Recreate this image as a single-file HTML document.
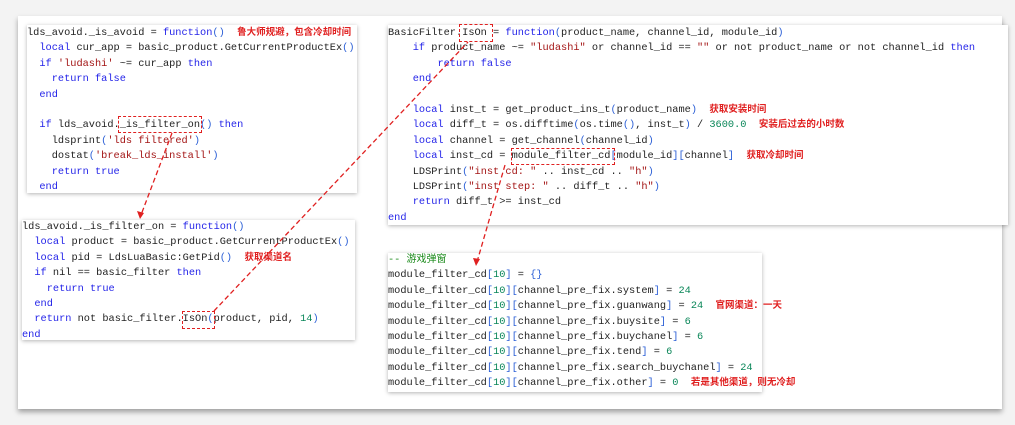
<!DOCTYPE html>
<html><head><meta charset="utf-8"><style>
body{margin:0;width:1015px;height:425px;background:#f3f3f3;position:relative;overflow:hidden;font-family:"Liberation Mono",monospace}
.panel{position:absolute;left:18px;top:16px;width:984px;height:393px;background:#fff;box-shadow:0 3px 5px rgba(0,0,0,.35)}
.box{position:absolute;background:#fff;box-shadow:0 1px 4px rgba(0,0,0,.3)}
pre{margin:0;font-family:"Liberation Mono",monospace;font-size:10.3px;line-height:15.4px;color:#222;white-space:pre}
pre>*{line-height:0}
.k{color:#2323e8}.s{color:#a31515}.n{color:#098658}.c{color:#1a8a1a}.b{color:#2b5fd6}
.a{font-family:"Noto Sans CJK SC",sans-serif;font-weight:bold;color:#e02020;font-size:9.5px;line-height:0}
.cj{font-family:"Noto Sans CJK SC",sans-serif;line-height:0;font-size:10px}
.d{position:absolute;border:1.5px dashed #e02020}
svg{position:absolute;left:0;top:0}
</style></head><body>
<div class="panel"></div>
<div class="box" style="left:27px;top:25px;width:330px;height:168px"><pre style="padding-top:1px">lds_avoid._is_avoid = <span class="k">function</span><span class="b">()</span>  <span class="a">鲁大师规避，包含冷却时间</span>
  <span class="k">local</span> cur_app = basic_product.GetCurrentProductEx<span class="b">()</span>
  <span class="k">if</span> <span class="s">'ludashi'</span> ~= cur_app <span class="k">then</span>
    <span class="k">return false</span>
  <span class="k">end</span>

  <span class="k">if</span> lds_avoid._is_filter_on<span class="b">()</span> <span class="k">then</span>
    ldsprint<span class="b">(</span><span class="s">'lds filtered'</span><span class="b">)</span>
    dostat<span class="b">(</span><span class="s">'break_lds_install'</span><span class="b">)</span>
    <span class="k">return true</span>
  <span class="k">end</span></pre></div>
<div class="box" style="left:388px;top:25px;width:620px;height:200px"><pre style="padding-top:1px">BasicFilter.IsOn = <span class="k">function</span><span class="b">(</span>product_name, channel_id, module_id<span class="b">)</span>
    <span class="k">if</span> product_name ~= <span class="s">"ludashi"</span> or channel_id == <span class="s">""</span> or not product_name or not channel_id <span class="k">then</span>
        <span class="k">return false</span>
    <span class="k">end</span>

    <span class="k">local</span> inst_t = get_product_ins_t<span class="b">(</span>product_name<span class="b">)</span>  <span class="a">获取安装时间</span>
    <span class="k">local</span> diff_t = os.difftime<span class="b">(</span>os.time<span class="b">()</span>, inst_t<span class="b">)</span> / <span class="n">3600.0</span>  <span class="a">安装后过去的小时数</span>
    <span class="k">local</span> channel = get_channel<span class="b">(</span>channel_id<span class="b">)</span>
    <span class="k">local</span> inst_cd = module_filter_cd<span class="b">[</span>module_id<span class="b">][</span>channel<span class="b">]</span>  <span class="a">获取冷却时间</span>
    LDSPrint<span class="b">(</span><span class="s">"inst cd: "</span> .. inst_cd .. <span class="s">"h"</span><span class="b">)</span>
    LDSPrint<span class="b">(</span><span class="s">"inst step: "</span> .. diff_t .. <span class="s">"h"</span><span class="b">)</span>
    <span class="k">return</span> diff_t >= inst_cd
<span class="k">end</span></pre></div>
<div class="box" style="left:22px;top:220px;width:333px;height:120px"><pre>lds_avoid._is_filter_on = <span class="k">function</span><span class="b">()</span>
  <span class="k">local</span> product = basic_product.GetCurrentProductEx<span class="b">()</span>
  <span class="k">local</span> pid = LdsLuaBasic:GetPid<span class="b">()</span>  <span class="a">获取渠道名</span>
  <span class="k">if</span> nil == basic_filter <span class="k">then</span>
    <span class="k">return true</span>
  <span class="k">end</span>
  <span class="k">return</span> not basic_filter.IsOn<span class="b">(</span>product, pid, <span class="n">14</span><span class="b">)</span>
<span class="k">end</span></pre></div>
<div class="box" style="left:388px;top:253px;width:374px;height:139px"><pre><span class="c">-- <span class="cj">游戏弹窗</span></span>
module_filter_cd<span class="b">[</span><span class="n">10</span><span class="b">]</span> = <span class="b">{}</span>
module_filter_cd<span class="b">[</span><span class="n">10</span><span class="b">][</span>channel_pre_fix.system<span class="b">]</span> = <span class="n">24</span>
module_filter_cd<span class="b">[</span><span class="n">10</span><span class="b">][</span>channel_pre_fix.guanwang<span class="b">]</span> = <span class="n">24</span>  <span class="a">官网渠道：一天</span>
module_filter_cd<span class="b">[</span><span class="n">10</span><span class="b">][</span>channel_pre_fix.buysite<span class="b">]</span> = <span class="n">6</span>
module_filter_cd<span class="b">[</span><span class="n">10</span><span class="b">][</span>channel_pre_fix.buychanel<span class="b">]</span> = <span class="n">6</span>
module_filter_cd<span class="b">[</span><span class="n">10</span><span class="b">][</span>channel_pre_fix.tend<span class="b">]</span> = <span class="n">6</span>
module_filter_cd<span class="b">[</span><span class="n">10</span><span class="b">][</span>channel_pre_fix.search_buychanel<span class="b">]</span> = <span class="n">24</span>
module_filter_cd<span class="b">[</span><span class="n">10</span><span class="b">][</span>channel_pre_fix.other<span class="b">]</span> = <span class="n">0</span>  <span class="a">若是其他渠道，则无冷却</span></pre></div>
<div class="d" style="left:118px;top:116px;width:82px;height:15px"></div>
<div class="d" style="left:459px;top:24px;width:32px;height:16px"></div>
<div class="d" style="left:511px;top:148px;width:102px;height:15px"></div>
<div class="d" style="left:182px;top:311px;width:31px;height:16px"></div>
<svg width="1015" height="425">
<g stroke="#e02020" stroke-width="1.3" stroke-dasharray="5,3" fill="none">
<line x1="172" y1="133" x2="141" y2="215"/>
<line x1="214" y1="311" x2="468" y2="42"/>
<line x1="505" y1="165" x2="477" y2="262"/>
</g>
<g fill="#e02020">
<polygon points="140,219 137,211 144,213"/>
<polygon points="476,266 473,258 480,259"/>
</g>
</svg>
</body></html>
